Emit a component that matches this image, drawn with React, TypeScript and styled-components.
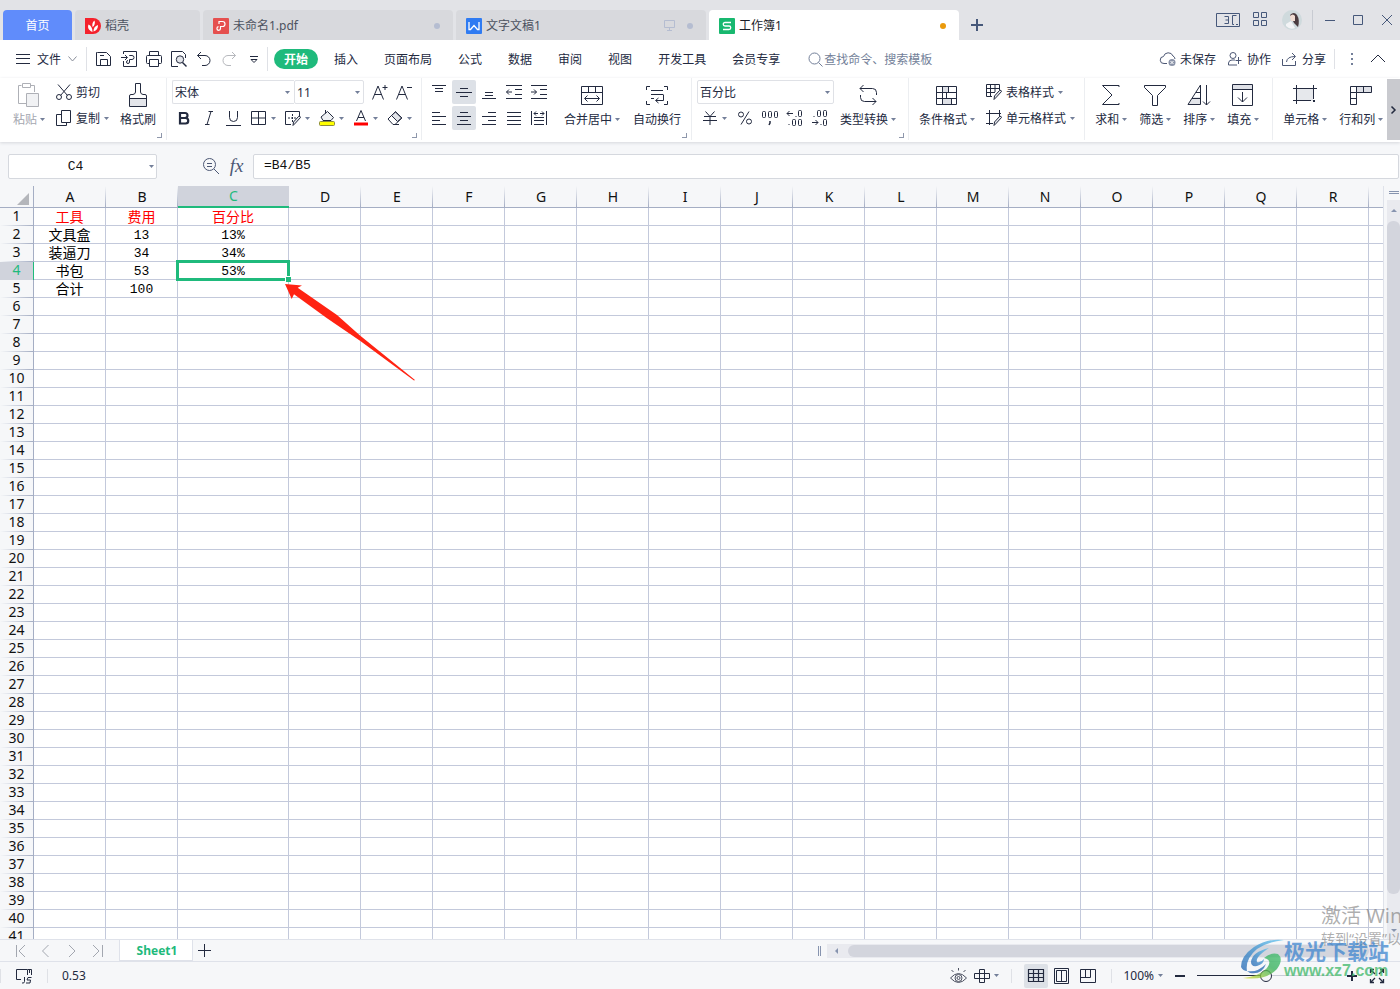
import React from "react";
import styled, { createGlobalStyle, css } from "styled-components";

const INK = "#232a3f";
const MUTED = "#737f99";
const GREEN = "#1fba7c";
const PANEL = "#f6f7f9";
const LINE = "#c3c9db";
const UI_FONT = `"Noto Sans", "Noto Sans CJK SC", sans-serif`;

const GlobalStyle = createGlobalStyle`
  *, *::before, *::after { box-sizing: border-box; }
  body { margin: 0; overflow: hidden; }
  button, input, select { font: inherit; color: inherit; }
`;

const App_ = styled.div`
  position: relative;
  display: flex;
  flex-direction: column;
  height: 100vh;
  overflow: hidden;
  background: ${PANEL};
  color: ${INK};
  font: 12px/17px ${UI_FONT};
`;

const PlainButton = styled.button<{ $faded?: boolean }>`
  display: flex;
  align-items: center;
  flex: none;
  gap: 4px;
  padding: 0;
  border: 0;
  background: none;
  white-space: nowrap;
  color: ${(p) => (p.$faded ? "#a4a7b0" : "inherit")};
`;

const Divider = styled.span<{ $h: number; $tone?: string }>`
  flex: none;
  width: 1px;
  height: ${(p) => p.$h}px;
  background: ${(p) => p.$tone || "#dfe1e6"};
`;

/* ---------- icons ---------- */

const Svg = styled.svg`
  display: block;
  flex: none;
  overflow: visible;
`;

type IconProps = { w?: number; h?: number; color?: string; children: React.ReactNode };
const Icon = ({ w = 16, h = 16, color = INK, children }: IconProps) => (
  <Svg width={w} height={h} viewBox={`0 0 ${w} ${h}`} fill="none" stroke={color} strokeWidth={1} aria-hidden="true">
    {children}
  </Svg>
);

const Caret = () => (
  <Svg width={5} height={3} viewBox="0 0 5 3" aria-hidden="true">
    <path d="M0 0h5L2.5 3z" fill={MUTED} />
  </Svg>
);

/* ---------- title bar ---------- */

const TitleBar = styled.header`
  display: flex;
  align-items: flex-end;
  flex: none;
  gap: 3px;
  height: 40px;
  padding: 0 5px 0 3px;
  background: #e2e3e7;
`;

const Tab = styled.button<{ $w: number; $kind?: "home" | "active" }>`
  display: flex;
  align-items: center;
  gap: 4px;
  width: ${(p) => p.$w}px;
  height: 30px;
  padding: 1px 13px 0 10px;
  border: 0;
  border-radius: 4px 4px 0 0;
  background: #d8d9dd;
  color: #4c5260;
  ${(p) => p.$kind === "home" && css`background: #608cfb; color: #fff; justify-content: center; padding: 1px 0 0;`}
  ${(p) => p.$kind === "active" && css`background: #fff; color: #1b1f2a;`}
`;

const TabStatus = styled.span`
  display: flex;
  align-items: center;
  gap: 12px;
  margin-left: auto;
`;

const Dot = styled.span<{ $color: string }>`
  width: 6px;
  height: 6px;
  border-radius: 50%;
  background: ${(p) => p.$color};
`;

const NewTab = styled(PlainButton)`
  height: 30px;
  margin-left: 8px;
`;

const WindowControls = styled.div`
  display: flex;
  align-items: center;
  gap: 10px;
  height: 40px;
  margin-left: auto;
`;

const ControlSet = styled.div<{ $gap: number }>`
  display: flex;
  align-items: center;
  gap: ${(p) => p.$gap}px;
`;

/* ---------- menu row ---------- */

const MenuRow = styled.nav`
  display: flex;
  align-items: center;
  flex: none;
  height: 38px;
  padding: 0 15px 0 16px;
  background: #fff;
`;

const QuickAccess = styled.div`
  display: flex;
  gap: 9px;
  padding: 0 5px 0 9px;
`;

const FileButton = styled(PlainButton)`
  gap: 7px;
  margin-right: 9px;
`;

const MenuTabs = styled.div`
  display: flex;
  gap: 6px;
  margin-left: 6px;
`;

const MenuTab = styled.button<{ $on?: boolean }>`
  height: 20px;
  padding: 1px 10px 0;
  border: 0;
  border-radius: 10px;
  background: ${(p) => (p.$on ? GREEN : "none")};
  color: ${(p) => (p.$on ? "#fff" : INK)};
  font-weight: ${(p) => (p.$on ? 700 : 400)};
  white-space: nowrap;
`;

const Search = styled.label`
  display: flex;
  align-items: center;
  gap: 1px;
  margin-left: 18px;
  input {
    width: 120px;
    padding: 0;
    border: 0;
    outline: 0;
    background: none;
  }
  input::placeholder { color: ${MUTED}; opacity: 1; }
`;

const MenuRight = styled.div`
  display: flex;
  align-items: center;
  gap: 11px;
  margin-left: auto;
`;

const MenuEnd = styled.div`
  display: flex;
  align-items: center;
  gap: 9px;
  margin-left: -3px;
`;

/* ---------- ribbon ---------- */

const Ribbon = styled.section`
  position: relative;
  z-index: 1;
  display: flex;
  flex: none;
  height: 64px;
  padding-bottom: 2px;
  background: #fff;
  box-shadow: 0 1px 3px #d5d7dc;
`;

const Group = styled.div<{ $gap?: number; $pad: string; $corner?: boolean }>`
  position: relative;
  display: flex;
  align-items: flex-start;
  flex: none;
  gap: ${(p) => p.$gap ?? 12}px;
  padding: ${(p) => p.$pad};
  &:not(:last-of-type) { border-right: 1px solid #eceef1; }
  ${(p) =>
    p.$corner &&
    css`
      &::after {
        content: "";
        position: absolute;
        right: 4px;
        bottom: 2px;
        width: 5px;
        height: 5px;
        border: solid #8e97ab;
        border-width: 0 1px 1px 0;
      }
    `}
`;

const Stack = styled.div`
  display: grid;
  grid-auto-rows: 24px;
  gap: 2px;
`;

const ToolRow = styled.div<{ $gap?: number; $inset?: number }>`
  display: flex;
  align-items: center;
  gap: ${(p) => p.$gap ?? 0}px;
  padding-left: ${(p) => p.$inset ?? 0}px;
`;

const BigButtonBox = styled.button<{ $faded?: boolean }>`
  display: flex;
  flex-direction: column;
  align-items: center;
  flex: none;
  gap: 4px;
  padding: 3px 0 0;
  border: 0;
  background: none;
  color: ${(p) => (p.$faded ? "#a4a7b0" : INK)};
  white-space: nowrap;
`;

const BigLabel = styled.span`
  display: flex;
  align-items: center;
  gap: 3px;
`;

const BigButton = ({ label, icon, caret = true, faded }: { label: string; icon: React.ReactNode; caret?: boolean; faded?: boolean }) => (
  <BigButtonBox type="button" $faded={faded}>
    {icon}
    <BigLabel>
      {label}
      {caret && <Caret />}
    </BigLabel>
  </BigButtonBox>
);

const SelectWrap = styled.label<{ $w: number; $join?: boolean }>`
  position: relative;
  display: block;
  width: ${(p) => p.$w}px;
  height: 24px;
  select {
    width: 100%;
    height: 100%;
    padding: 1px 2px 0;
    border: 1px solid #dfe1e6;
    border-right-width: ${(p) => (p.$join ? 0 : 1)}px;
    border-radius: ${(p) => (p.$join ? "2px 0 0 2px" : "2px")};
    outline: 0;
    background: #fff;
    appearance: none;
  }
  svg {
    position: absolute;
    top: 11px;
    right: 4px;
  }
`;

const Combo = ({ w, value, name, join }: { w: number; value: string; name: string; join?: boolean }) => (
  <SelectWrap $w={w} $join={join}>
    <select aria-label={name} defaultValue={value}>
      <option>{value}</option>
    </select>
    <Caret />
  </SelectWrap>
);

const SquareTool = styled.button<{ $on?: boolean }>`
  display: grid;
  place-items: center;
  width: 24px;
  height: 24px;
  padding: 0;
  border: 0;
  border-radius: 2px;
  background: ${(p) => (p.$on ? "#dde1e7" : "none")};
`;

const RibbonScroll = styled.button`
  display: grid;
  place-items: center;
  align-self: stretch;
  width: 13px;
  margin: 1px 0 0 auto;
  padding: 0;
  border: 0;
  background: #c9cacf;
`;

/* ---------- formula bar ---------- */

const FormulaBar = styled.section`
  display: flex;
  align-items: center;
  flex: none;
  gap: 7px;
  height: 44px;
  padding: 4px 1px 0 8px;
`;

const Field = styled.input`
  flex: 1;
  width: 100%;
  height: 25px;
  padding: 0 10px 2px;
  border: 1px solid #d5d8de;
  border-radius: 2px;
  outline: 0;
  background: #fff;
  color: #111;
  font: 13px "Liberation Mono", monospace;
`;

const NameBox = styled.label`
  position: relative;
  flex: none;
  width: 149px;
  margin-right: 38px;
  ${Field} { text-align: center; padding: 0 20px 0 6px; }
  svg { position: absolute; top: 11px; right: 3px; }
`;

const Fx = styled(PlainButton)`
  justify-content: center;
  width: 19px;
  height: 20px;
  color: #4c5774;
  font: italic 19px/20px "Liberation Serif", serif;
`;

/* ---------- sheet ---------- */

const SheetArea = styled.main`
  display: flex;
  flex: 1;
  min-height: 0;
  overflow: hidden;
`;

const GridClip = styled.div`
  position: relative;
  flex: 1;
  min-width: 0;
  overflow: hidden;
  border-right: 1px solid #dfe2ea;
`;

const Grid = styled.table`
  width: 1441px;
  table-layout: fixed;
  border-collapse: separate;
  border-spacing: 0;
  background: #fff;
`;

const ColHead = styled.th<{ $on?: boolean }>`
  height: 22px;
  padding: 0;
  border-bottom: 1px solid #a5aec4;
  background: linear-gradient(to bottom, ${PANEL}, #a5aec4) right / 1px 100% no-repeat ${PANEL};
  color: #111;
  font: 14px/20px ${UI_FONT};
  ${(p) => p.$on && css`background: #d0d3dc; color: ${GREEN}; border-bottom: 2px solid ${GREEN};`}
`;

const RowHead = styled.th<{ $on?: boolean }>`
  height: 18px;
  padding: 0 0 2px;
  border-right: 1px solid ${(p) => (p.$on ? GREEN : "#a5aec4")};
  background: linear-gradient(to right, ${PANEL}, #a5aec4) bottom / 100% 1px no-repeat ${PANEL};
  color: #111;
  font: 14px/16px ${UI_FONT};
  ${(p) => p.$on && css`background: #d0d3dc; color: ${GREEN};`}
`;

const CornerHead = styled.th`
  padding: 0;
  border-right: 1px solid #a5aec4;
  border-bottom: 1px solid #a5aec4;
  background: ${PANEL};
  svg { margin: 4px 4px 0 auto; }
`;

const Cell = styled.td<{ $kind?: "text" | "title" | "number" }>`
  position: relative;
  height: 18px;
  padding: 0;
  border-right: 1px solid ${LINE};
  border-bottom: 1px solid ${LINE};
  color: ${(p) => (p.$kind === "title" ? "#f00" : "#000")};
  font: 14px/17px "Noto Sans CJK SC", sans-serif;
  ${(p) => p.$kind === "number" && css`padding-top: 3px; font: 13px/14px "Liberation Mono", monospace;`}
  text-align: center;
  white-space: nowrap;
`;

const Selection = styled.span`
  position: absolute;
  inset: -2px -2px -2px -2px;
  z-index: 1;
  border: 3px solid ${GREEN};
  &::after {
    content: "";
    position: absolute;
    right: -4px;
    bottom: -4px;
    width: 6px;
    height: 6px;
    border: solid #fff;
    border-width: 1px 0 0 1px;
    background: ${GREEN};
  }
`;

const Pointer = styled.svg`
  position: absolute;
  top: 98px;
  left: 285px;
  z-index: 2;
`;

const VScroll = styled.div`
  display: flex;
  flex-direction: column;
  align-items: center;
  flex: none;
  width: 16px;
  padding-left: 3px;
`;

const SplitHandle = styled.span<{ $v?: boolean }>`
  flex: none;
  border: solid #8794af;
  ${(p) =>
    p.$v
      ? css`width: 3px; height: 10px; border-width: 0 1px;`
      : css`width: 10px; height: 3px; margin: 5px 0 6px; border-width: 1px 0;`}
`;

const VTrack = styled.div`
  display: flex;
  flex-direction: column;
  align-items: center;
  flex: 1;
  gap: 9px;
  width: 13px;
  padding: 9px 0 7px;
  background: #e9eaef;
`;

const Thumb = styled.span`
  flex: 1;
  align-self: stretch;
  border-radius: 6px;
  background: #d3d5dd;
`;

const VThumb = styled(Thumb)`
  margin-bottom: 26px;
`;

/* ---------- bottom bars ---------- */

const SheetBar = styled.section`
  display: flex;
  align-items: stretch;
  flex: none;
  height: 22px;
  padding: 0 17px 0 14px;
  border-top: 1px solid #dfe2ea;
`;

const SheetNav = styled.div`
  display: flex;
  align-items: center;
  gap: 12px;
  margin-right: 13px;
`;

const SheetTab = styled.button`
  width: 74px;
  padding: 1px 0 0 2px;
  border: solid #dfe2ea;
  border-width: 0 1px 1px;
  background: #fff;
  color: ${GREEN};
  font-weight: 700;
`;

const AddSheet = styled(PlainButton)`
  margin-left: 5px;
`;

const HScroll = styled.div`
  display: flex;
  align-items: center;
  gap: 6px;
  width: 565px;
  margin-left: auto;
`;

const HTrack = styled.div`
  display: flex;
  align-items: center;
  flex: 1;
  gap: 10px;
  height: 14px;
  padding: 1px 14px 1px 8px;
  background: #e9eaef;
`;

const HThumb = styled(Thumb)`
  height: 12px;
`;

const StatusBar = styled.footer`
  display: flex;
  align-items: center;
  flex: none;
  gap: 14px;
  height: 28px;
  padding-right: 15px;
  border-top: 1px solid #dfe2ea;
`;

const StatusTools = styled.div`
  display: flex;
  align-items: center;
  gap: 7px;
  margin-left: auto;
`;

const StatusGroup = styled.div<{ $gap: number; $side?: number }>`
  display: flex;
  align-items: center;
  gap: ${(p) => p.$gap}px;
  padding: 0 ${(p) => p.$side ?? 0}px;
`;

const ZoomSlider = styled.input`
  width: 138px;
  height: 12px;
  margin: 0;
  appearance: none;
  background: linear-gradient(to right, ${INK} 50%, #c9ccd6 50%) center / 100% 1px no-repeat;
  &::-webkit-slider-thumb {
    appearance: none;
    width: 12px;
    height: 12px;
    border: 1px solid ${INK};
    border-radius: 50%;
    background: ${PANEL};
  }
`;

/* ---------- overlays ---------- */

const Activation = styled.div`
  position: absolute;
  right: 0;
  bottom: 40px;
  z-index: 3;
  width: 79px;
  overflow: hidden;
  color: rgba(120, 120, 120, 0.6);
  font-size: 14px;
  line-height: 20px;
  white-space: nowrap;
  pointer-events: none;
  strong { display: block; font-weight: 400; font-size: 20px; line-height: 26px; }
`;

const Brand = styled.div`
  position: absolute;
  right: 11px;
  bottom: 7px;
  z-index: 4;
  display: flex;
  align-items: center;
  opacity: 0.75;
  pointer-events: none;
`;

const BrandText = styled.div`
  color: #3f86cf;
  font: 700 21px/22px "Noto Sans CJK SC", sans-serif;
  white-space: nowrap;
  small { display: block; color: #3fb868; font: 700 16px/20px "Liberation Sans", sans-serif; }
`;

/* ---------- data ---------- */

const COLUMNS = "ABCDEFGHIJKLMNOPQRS".split("");
const ROWS = Array.from({ length: 41 }, (_, i) => i + 1);
const DATA: Record<number, string[]> = {
  1: ["工具", "费用", "百分比"],
  2: ["文具盒", "13", "13%"],
  3: ["装逼刀", "34", "34%"],
  4: ["书包", "53", "53%"],
  5: ["合计", "100", ""],
};
const MENU = ["开始", "插入", "页面布局", "公式", "数据", "审阅", "视图", "开发工具", "会员专享"];

const kindOf = (text: string, row: number) =>
  row === 1 ? "title" : /^\d/.test(text) ? "number" : "text";

const lines = (rows: [number, number, number][]) => (
  <Icon>
    <path d={rows.map(([y, a, b]) => `M${a} ${y}.5H${b}`).join("")} />
  </Icon>
);

const ALIGN_TOP: [string, React.ReactNode, boolean?][] = [
  ["顶端对齐", lines([[1, 1, 15], [4, 4, 12], [7, 4, 12]])],
  ["垂直居中", lines([[4, 4, 12], [8, 0, 16], [12, 4, 12]]), true],
  ["底端对齐", lines([[8, 4, 12], [11, 4, 12], [14, 1, 15]])],
  ["减少缩进", <Icon key="o"><path d="M0 1.5H16M9 5.5H16M9 10.5H16M0 14.5H16M6 8H.5M3 5.5.5 8 3 10.5" /></Icon>],
  ["增加缩进", <Icon key="i"><path d="M0 1.5H16M9 5.5H16M9 10.5H16M0 14.5H16M0 8H5.5M3 5.5 5.5 8 3 10.5" /></Icon>],
];
const ALIGN_BOTTOM: [string, React.ReactNode, boolean?][] = [
  ["左对齐", lines([[2, 1, 9], [6, 1, 15], [10, 1, 9], [14, 1, 15]])],
  ["居中", lines([[2, 4, 12], [6, 1, 15], [10, 4, 12], [14, 1, 15]]), true],
  ["右对齐", lines([[2, 7, 15], [6, 1, 15], [10, 7, 15], [14, 1, 15]])],
  ["两端对齐", lines([[2, 1, 15], [6, 1, 15], [10, 1, 15], [14, 1, 15]])],
  ["分散对齐", <Icon key="d"><path d="M.5 1V15M15.5 1V15M3 7.5H13M3 10.5H13M3 14.5H13M3 3.5H7M9 3.5H13M5 1.5 3 3.5 5 5.5M11 1.5 13 3.5 11 5.5" /></Icon>],
];

const BrushOverlay = () => (
  <path d="M15.5 7.5 10.5 13 8 15.5 8.5 12 13.7 6.3Q15.5 6 15.5 7.5Z" fill="#e8eaee" />
);

export default function App() {
  return (
    <App_>
      <GlobalStyle />

      <TitleBar>
        <Tab $w={69} $kind="home">首页</Tab>
        <Tab $w={125}>
          <Icon>
            <path d="M0 0H8A8 8 0 0 1 8 16H0Z" fill="#f5222d" stroke="none" />
            <path d="M7.500 14C3 12 2.500 9 3.500 6.500 6 7.500 7.500 10 7.500 14ZM7.500 9C7 6 7.500 4 9.500 2.500 10.500 5 9.500 8 7.500 9ZM8.500 13.500C8.500 10 10 8 13 7 13 10 12 12.500 8.500 13.500Z" fill="#fff" stroke="none" />
          </Icon>
          稻壳
        </Tab>
        <Tab $w={250}>
          <Icon>
            <rect width="16" height="16" rx="1" fill="#e5504f" stroke="none" />
            <path d="M6 6V3.500H9.500A2.500 2.500 0 0 1 9.500 8.500H7.500V10.500A1.800 1.800 0 1 1 5.500 8.700" stroke="#fff" strokeWidth="1.200" />
          </Icon>
          未命名1.pdf
          <TabStatus><Dot $color="#b5bdd1" /></TabStatus>
        </Tab>
        <Tab $w={250}>
          <Icon>
            <rect width="16" height="16" rx="1" fill="#2f7bf2" stroke="none" />
            <path d="M3 4V11.500H4.500L8 7.500 11.500 11.500H13V4" stroke="#fff" strokeWidth="1.300" />
          </Icon>
          文字文稿1
          <TabStatus>
            <Icon w={11} h={11} color="#b5bdd1">
              <path d="M.5.5H10.500V7.500H.5ZM5.500 7.500V10.500M3 10.500H8" />
            </Icon>
            <Dot $color="#b5bdd1" />
          </TabStatus>
        </Tab>
        <Tab $w={250} $kind="active">
          <Icon>
            <rect width="16" height="16" rx="1" fill="#18b86f" stroke="none" />
            <path d="M12 4.500H6A1.700 1.700 0 0 0 6 8H10A1.700 1.700 0 0 1 10 11.500H4" stroke="#fff" strokeWidth="1.300" />
          </Icon>
          工作簿1
          <TabStatus><Dot $color="#ea9a0c" /></TabStatus>
        </Tab>
        <NewTab type="button" aria-label="新建标签">
          <Icon w={14} h={12} color="#46587a"><path d="M7 0V12M1 6H13" strokeWidth="2" /></Icon>
        </NewTab>
        <WindowControls>
          <ControlSet $gap={13}>
            <PlainButton type="button" aria-label="窗口列表">
              <Icon w={24} h={14} color="#46587a">
                <path d="M.5.5H23.500V13.500H.5ZM20.500 2.500H16.500V11.500H18M20 11.500H22" />
                <path d="M8.500 3.500H12.500V10.500H8.500M9.500 7H12.500" />
              </Icon>
            </PlainButton>
            <PlainButton type="button" aria-label="应用">
              <Icon color="#46587a"><path d="M.5.5H5.500V5.500H.5ZM8.500.5H13.500V5.500H8.500ZM.5 8.500H5.500V13.500H.5ZM8.500 8.500H13.500V13.500H8.500Z" /></Icon>
            </PlainButton>
            <PlainButton type="button" aria-label="账户">
              <Icon w={20} h={20}>
                <circle cx="10" cy="10" r="10" fill="#cfdadd" stroke="none" />
                <path d="M8 5Q12 1 15 5 18 10 16 17L12 13Z" fill="#4b3c40" stroke="none" />
                <path d="M8 6Q11 3 13 6V11L9 11Z" fill="#f0dcd2" stroke="none" />
                <path d="M4 14 9 11 13 18Q8 20 4 16Z" fill="#f3f4f6" stroke="none" />
              </Icon>
            </PlainButton>
          </ControlSet>
          <Divider $h={20} $tone="#c8cbd2" />
          <ControlSet $gap={12}>
            <PlainButton type="button" aria-label="最小化"><Icon color="#46587a"><path d="M2 8.500H12" /></Icon></PlainButton>
            <PlainButton type="button" aria-label="最大化"><Icon color="#46587a"><path d="M2.500 3.500H11.500V12.500H2.500Z" /></Icon></PlainButton>
            <PlainButton type="button" aria-label="关闭"><Icon color="#46587a"><path d="M3 3 13 13M13 3 3 13" /></Icon></PlainButton>
          </ControlSet>
        </WindowControls>
      </TitleBar>

      <MenuRow>
        <FileButton type="button">
          <Icon w={14} h={12}><path d="M0 1.500H14M0 5.500H14M0 10.500H14" /></Icon>
          文件
          <Icon w={9} h={6} color="#8a8f9b"><path d="M.5.5 4.500 5 8.500.5" /></Icon>
        </FileButton>
        <Divider $h={24} />
        <QuickAccess>
          <PlainButton type="button" aria-label="保存">
            <Icon><path d="M1.500 1.500H10.500L14.500 5.500V14.500H.5V1.500ZM4.500 14.500V8.500H11.500V14.500M4 4.500H8" /></Icon>
          </PlainButton>
          <PlainButton type="button" aria-label="输出为PDF">
            <Icon><path d="M2.500 3V.5H15.500V15.500H2.500V10M0 6.500H6M4 4 6.500 6.500 4 9M8.500 5V4.500H11A2 2 0 0 1 11 8.500H8.500V11A1.500 1.500 0 1 1 7 9.500" /></Icon>
          </PlainButton>
          <PlainButton type="button" aria-label="打印">
            <Icon><path d="M3.500 4.500V.5H12.500V4.500M3.500 12.500H1.500Q.5 12.500.5 11.500V5.500Q.5 4.500 1.500 4.500H14.500Q15.500 4.500 15.500 5.500V11.500Q15.500 12.500 14.500 12.500H12.500M3.500 8.500H12.500V15.500H3.500Z" /></Icon>
          </PlainButton>
          <PlainButton type="button" aria-label="打印预览">
            <Icon>
              <path d="M14.500 7V3.500L11.500.5H.5V15.500H7" />
              <circle cx="9" cy="8.500" r="3.700" fill="#e3e5ea" />
              <path d="M11.500 11.500 15.500 15.500" strokeWidth="1.500" />
            </Icon>
          </PlainButton>
          <PlainButton type="button" aria-label="撤销">
            <Icon><path d="M5 1 1.500 4.500 5 8M1.500 4.500H9A5 5 0 0 1 9 14.500H6" /></Icon>
          </PlainButton>
          <PlainButton type="button" aria-label="恢复">
            <Icon color="#b6b8bd"><path d="M11 1 14.500 4.500 11 8M14.500 4.500H7A5 5 0 0 0 7 14.500H10" /></Icon>
          </PlainButton>
          <PlainButton type="button" aria-label="自定义快速访问">
            <Icon><path d="M4 5.500H12M5 8.500H11L8 11.500Z" /></Icon>
          </PlainButton>
        </QuickAccess>
        <Divider $h={24} />
        <MenuTabs>
          {MENU.map((m, i) => (
            <MenuTab key={m} type="button" $on={i === 0}>{m}</MenuTab>
          ))}
        </MenuTabs>
        <Search>
          <Icon w={15} h={15} color={MUTED}><circle cx="6.500" cy="6.500" r="5.500" /><path d="M10.500 10.500 14.500 14.500" /></Icon>
          <input aria-label="搜索" placeholder="查找命令、搜索模板" />
        </Search>
        <MenuRight>
          <PlainButton type="button">
            <Icon color="#4c5774">
              <path d="M7 12.500H4A3.500 3.500 0 0 1 3.500 5.500 5 5 0 0 1 13 5 3.500 3.500 0 0 1 15 8" />
              <circle cx="12" cy="11.500" r="3.500" fill="#8a93a8" stroke="none" />
              <path d="M10.500 10 13.500 13M13.500 10 10.500 13" stroke="#fff" />
            </Icon>
            未保存
          </PlainButton>
          <PlainButton type="button">
            <Icon color="#4c5774">
              <circle cx="6" cy="4.500" r="3" />
              <path d="M10 14H1.500V12A3.500 3.500 0 0 1 5 9H8M11.500 6V13M8.500 9.500H14.500" />
            </Icon>
            协作
          </PlainButton>
          <PlainButton type="button">
            <Icon color="#4c5774"><path d="M.5 8V14.500H13.500V10M4.500 11Q5 5.500 13 5.500M10 2 13.500 5.500 10 9" /></Icon>
            分享
          </PlainButton>
          <MenuEnd>
            <Divider $h={20} />
            <PlainButton type="button" aria-label="更多">
              <Icon><path d="M8 2V4M8 7V9M8 12V14" strokeWidth="2" stroke={MUTED} /></Icon>
            </PlainButton>
            <PlainButton type="button" aria-label="收起功能区">
              <Icon><path d="M2 11 9 4 16 11" /></Icon>
            </PlainButton>
          </MenuEnd>
        </MenuRight>
      </MenuRow>

      <Ribbon>
        <Group $pad="2px 10px 0 13px" $gap={11} $corner>
          <BigButton
            faded
            label="粘贴"
            icon={
              <Icon w={24} h={24} color="#aeb0b6">
                <path d="M4.500 2.500H1.500V20.500H9M13.500 2.500H17.500V9M5.500.5H13.500V4.500H5.500Z" />
                <path d="M9.500 10.500H21.500V23.500H9.500Z" fill="#f1f2f4" />
              </Icon>
            }
          />
          <Stack>
            <PlainButton type="button">
              <Icon>
                <path d="M2 .5 11.500 11.500M14 .5 4.500 11.500" />
                <circle cx="3" cy="13" r="2.500" />
                <circle cx="13" cy="13" r="2.500" />
              </Icon>
              剪切
            </PlainButton>
            <PlainButton type="button">
              <Icon><path d="M5.500.5H14.500V12.500H5.500ZM5.500 4.500H.5V15.500H10.500V12.500" /></Icon>
              复制
              <Caret />
            </PlainButton>
          </Stack>
          <BigButton
            caret={false}
            label="格式刷"
            icon={
              <Icon w={20} h={24}>
                <path d="M1.500 16H18.500V23.500H1.500Z" fill="#e3e5ea" stroke="none" />
                <path d="M1.500 23.500V13Q1.500 11.500 3 11.500H5Q7.500 11 7.500 9V.5H12.500V9Q12.500 11 15 11.500H17Q18.500 11.500 18.500 13V23.500ZM1.500 15.500H18.500" />
              </Icon>
            }
          />
        </Group>

        <Group $pad="2px 9px 0 5px" $corner>
          <Stack>
            <ToolRow>
              <Combo w={122} value="宋体" name="字体" join />
              <Combo w={70} value="11" name="字号" />
              <ToolRow $gap={8} $inset={8}>
                <PlainButton type="button" aria-label="增大字号">
                  <Icon><path d="M.5 15.500 6 2 11.500 15.500M2.500 10.500H9.500M13 1V6M10.500 3.500H15.500" /></Icon>
                </PlainButton>
                <PlainButton type="button" aria-label="减小字号">
                  <Icon><path d="M.5 15.500 6 2 11.500 15.500M2.500 10.500H9.500M11 3.500H16" /></Icon>
                </PlainButton>
              </ToolRow>
            </ToolRow>
            <ToolRow $gap={9} $inset={4}>
              <PlainButton type="button" aria-label="加粗">
                <Icon><path d="M4 3H9A2.500 2.500 0 0 1 9 8H4ZM4 8H9.500A2.700 2.700 0 0 1 9.500 13.500H4Z" strokeWidth="2.200" /></Icon>
              </PlainButton>
              <PlainButton type="button" aria-label="倾斜">
                <Icon><path d="M7.500 1.500H12M4 14.500H8.500M10 1.500 6 14.500" /></Icon>
              </PlainButton>
              <PlainButton type="button" aria-label="下划线">
                <Icon><path d="M3.500 1V7.500A4 4 0 0 0 11.500 7.500V1M0 15.500H15" /></Icon>
              </PlainButton>
              <PlainButton type="button" aria-label="边框">
                <Icon><path d="M.5 1.500H14.500V14.500H.5ZM7.500 1.500V14.500M.5 8H14.500" /></Icon>
                <Caret />
              </PlainButton>
              <PlainButton type="button" aria-label="绘制边框">
                <Icon>
                  <path d="M14.500 6V1.500H.5V14.500H6" />
                  <path d="M7.500 4V12M3 8H12" strokeDasharray="2 1" />
                  <BrushOverlay />
                </Icon>
                <Caret />
              </PlainButton>
              <PlainButton type="button" aria-label="填充颜色">
                <Icon>
                  <path d="M2 7 8.500 1.500 14.500 7.500 12 10.500H4Z" fill="#eef0f3" />
                  <path d="M6.500 0V3.500" />
                  <rect x=".5" y="11.500" width="15" height="4" rx="1" fill="#ff0" stroke="#8c8c3c" />
                </Icon>
                <Caret />
              </PlainButton>
              <PlainButton type="button" aria-label="字体颜色">
                <Icon><path d="M3.500 11 8 .5 12.500 11M5 7.500H11" /><path d="M1 14H15" stroke="#f00" strokeWidth="3" /></Icon>
                <Caret />
              </PlainButton>
              <PlainButton type="button" aria-label="清除">
                <Icon>
                  <path d="M1 9 8.500 1.500 15 8 8 14.500H6Z" />
                  <path d="M8.500 2 14.500 8 10.500 11.500 4.500 5.500Z" fill="#e3e5ea" />
                  <path d="M6 14.500H12" />
                </Icon>
                <Caret />
              </PlainButton>
            </ToolRow>
          </Stack>
        </Group>

        <Group $pad="2px 10px 0 5px" $gap={13} $corner>
          <Stack>
            {[ALIGN_TOP, ALIGN_BOTTOM].map((set, i) => (
              <ToolRow key={i} $gap={1}>
                {set.map(([name, icon, on]) => (
                  <SquareTool key={name} type="button" aria-label={name} $on={on}>{icon}</SquareTool>
                ))}
              </ToolRow>
            ))}
          </Stack>
          <BigButton
            label="合并居中"
            icon={
              <Icon w={24} h={24}>
                <path d="M1.500 3.500H22.500V21.500H1.500ZM1.500 9.500H22.500M8.500 3.500V9.500M15.500 3.500V9.500M5 15.500H19M7.500 12.500 4.500 15.500 7.500 18.500M16.500 12.500 19.500 15.500 16.500 18.500" />
              </Icon>
            }
          />
          <BigButton
            caret={false}
            label="自动换行"
            icon={
              <Icon w={24} h={24}>
                <path d="M5 3.500H1.500V7M19 3.500H22.500V7M5 21.500H1.500V18M19 21.500H22.500V18M6 7.500H18M6 11.500H18M6 15.500H9M18.500 11.500V17.500H11M13.500 15 10.500 17.500 13.500 20" />
              </Icon>
            }
          />
        </Group>

        <Group $pad="2px 12px 0 5px" $gap={6} $corner>
          <Stack>
            <Combo w={137} value="百分比" name="数字格式" />
            <ToolRow $gap={9} $inset={5}>
              <PlainButton type="button" aria-label="货币">
                <Icon><path d="M3.500 1.500 8 6.500 12.500 1.500M2 6.500H14M1 10.500H15M8 6.500V15" /></Icon>
                <Caret />
              </PlainButton>
              <ToolRow $gap={7}>
                <PlainButton type="button" aria-label="百分比样式">
                  <Icon w={18} h={16}><circle cx="5" cy="4.500" r="2.500" /><circle cx="13" cy="11.500" r="2.500" /><path d="M13 1.500 5 14.500" /></Icon>
                </PlainButton>
                <PlainButton type="button" aria-label="千位分隔">
                  <Icon w={18} h={16}>
                    {[1.5, 7.5, 13.5].map((x) => <rect key={x} x={x} y="1.500" width="3" height="6" rx="1" />)}
                    <path d="M9 11V13L8 15" strokeWidth="1.500" />
                  </Icon>
                </PlainButton>
                <PlainButton type="button" aria-label="增加小数位">
                  <Icon w={18} h={16}>
                    <path d="M7 3.500H1M3.500 1 1 3.500 3.500 6M10 6V7M3 14V15" />
                    <rect x="12.500" y=".5" width="3" height="6" rx="1" />
                    <rect x="6.500" y="9.500" width="3" height="6" rx="1" />
                    <rect x="12.500" y="9.500" width="3" height="6" rx="1" />
                  </Icon>
                </PlainButton>
                <PlainButton type="button" aria-label="减少小数位">
                  <Icon w={18} h={16}>
                    <path d="M1 12.500H7M4.500 10 7 12.500 4.500 15M10 14V15M3 6V7" />
                    <rect x="6.500" y=".5" width="3" height="6" rx="1" />
                    <rect x="12.500" y=".5" width="3" height="6" rx="1" />
                    <rect x="12.500" y="9.500" width="3" height="6" rx="1" />
                  </Icon>
                </PlainButton>
              </ToolRow>
            </ToolRow>
          </Stack>
          <BigButton
            label="类型转换"
            icon={
              <Icon w={24} h={24}>
                <path d="M7.500 2 4 5.500 7.500 9M4 5.500H16.500Q20.500 5.500 20.500 9.500V12M16.500 15 20 18.500 16.500 22M20 18.500H8.500Q4.500 18.500 4.500 14.500V12" />
              </Icon>
            }
          />
        </Group>

        <Group $pad="2px 9px 0 10px" $gap={11}>
          <BigButton
            label="条件格式"
            icon={
              <Icon w={24} h={24}>
                <path d="M7 3H13V9H7ZM7 15H16V21H7Z" fill="#dfe1e7" stroke="none" />
                <path d="M1.500 3.500H21.500V21.500H1.500ZM1.500 9.500H21.500M1.500 15.500H21.500M7.500 3.500V21.500M13.500 3.500V9.500M11.500 9.500V15.500M16.500 15.500V21.500" />
              </Icon>
            }
          />
          <Stack>
            <PlainButton type="button">
              <Icon><path d="M13.500 6V.5H.5V12.500H6M.5 4.500H13.500M.5 8.500H9M4.500.5V12.500M9 .5V8" /><BrushOverlay /></Icon>
              表格样式
              <Caret />
            </PlainButton>
            <PlainButton type="button">
              <Icon><path d="M0 3.500H15M3.500 0V15M13.500 0V7M0 13.500H7" /><BrushOverlay /></Icon>
              单元格样式
              <Caret />
            </PlainButton>
          </Stack>
        </Group>

        <Group $pad="2px 13px 0 10px">
          <BigButton label="求和" icon={<Icon w={24} h={24}><path d="M20 4V2.500H3.500L13 12 3.500 21.500H20V20" /></Icon>} />
          <BigButton label="筛选" icon={<Icon w={24} h={24}><path d="M1.500 2.500H22.500V4.500L14.500 12.500V22.500H9.500V12.500L1.500 4.500Z" /></Icon>} />
          <BigButton
            label="排序"
            icon={
              <Icon w={24} h={24}>
                <path d="M6 14H13V21H2Z" fill="#e3e5ea" stroke="none" />
                <path d="M1 21.500 13.500 2V21.500ZM9 9.500H13.500M5 15.500H13.500M19.500 2V22M16 18.500 19.500 22 23 18.500" />
              </Icon>
            }
          />
          <BigButton
            label="填充"
            icon={
              <Icon w={24} h={24}>
                <path d="M2 2H22V6H2Z" fill="#dfe1e7" stroke="none" />
                <path d="M1.500 1.500H21.500V22.500H1.500ZM1.500 6.500H21.500M11.500 9V19M7 14.500 11.500 19 16 14.500" />
              </Icon>
            }
          />
        </Group>

        <Group $pad="2px 0 0 10px">
          <BigButton
            label="单元格"
            icon={
              <Icon w={24} h={24}>
                <path d="M4 6H20V18H4Z" fill="#e6e8ec" stroke="none" />
                <path d="M0 5.500H24M0 17.500H18M3.500 2V21M20.500 2V16" />
                <path d="M20 18H22" strokeWidth="2" />
              </Icon>
            }
          />
          <BigButton
            label="行和列"
            icon={
              <Icon w={24} h={24}>
                <path d="M8 3H23V9H8Z" fill="#dfe1e7" stroke="none" />
                <path d="M1.500 3.500H22.500V9.500H7.500V21.500H1.500ZM1.500 9.500H7.500V3.500M14.500 3.500V9.500M1.500 15.500H7.500" />
              </Icon>
            }
          />
        </Group>
        <RibbonScroll type="button" aria-label="更多工具">
          <Icon w={5} h={8}><path d="M.5.5 4 4 .5 7.500" strokeWidth="1.500" /></Icon>
        </RibbonScroll>
      </Ribbon>

      <FormulaBar>
        <NameBox>
          <Field aria-label="名称框" defaultValue="C4" />
          <Caret />
        </NameBox>
        <PlainButton type="button" aria-label="浏览公式结果">
          <Icon w={18} h={18} color="#4c5774"><circle cx="7.500" cy="7.500" r="6" /><path d="M5 6.500H10M5 9.500H10M12 12 17 17" /></Icon>
        </PlainButton>
        <Fx type="button">fx</Fx>
        <Field aria-label="编辑栏" defaultValue="=B4/B5" />
      </FormulaBar>

      <SheetArea>
        <GridClip>
          <Grid>
            <colgroup>
              <col style={{ width: 34 }} />
              {COLUMNS.map((c) => <col key={c} style={{ width: c === "C" ? 111 : 72 }} />)}
            </colgroup>
            <thead>
              <tr>
                <CornerHead aria-label="全选">
                  <Svg width={12} height={12} viewBox="0 0 12 12"><path d="M12 0V12H0Z" fill="#b4b6bb" /></Svg>
                </CornerHead>
                {COLUMNS.map((c) => <ColHead key={c} scope="col" $on={c === "C"}>{c}</ColHead>)}
              </tr>
            </thead>
            <tbody>
              {ROWS.map((r) => (
                <tr key={r}>
                  <RowHead scope="row" $on={r === 4}>{r}</RowHead>
                  {COLUMNS.map((c, i) => {
                    const text = DATA[r]?.[i] ?? "";
                    return (
                      <Cell key={c} $kind={text ? kindOf(text, r) : undefined}>
                        {text}
                        {r === 4 && c === "C" && <Selection />}
                      </Cell>
                    );
                  })}
                </tr>
              ))}
            </tbody>
          </Grid>
          <Pointer width={131} height={98} viewBox="0 0 131 98" aria-hidden="true">
            <path d="M0 0 17 1.500 12.700 3.700 52 31 75 51.500 130 96 129 96.500 75 56.700 42 34.300 9 10.300 6.700 15Z" fill="#ff2312" />
          </Pointer>
        </GridClip>
        <VScroll>
          <SplitHandle />
          <VTrack>
            <Svg width={6} height={3} viewBox="0 0 6 3"><path d="M3 0 6 3H0Z" fill="#8794af" /></Svg>
            <VThumb />
            <Svg width={6} height={3} viewBox="0 0 6 3"><path d="M0 0H6L3 3Z" fill="#8794af" /></Svg>
          </VTrack>
        </VScroll>
      </SheetArea>

      <SheetBar>
        <SheetNav>
          {[
            ["第一张", "M2.500 1V13M11 1 5 7 11 13"],
            ["上一张", "M8.500 1 2.500 7 8.500 13"],
            ["下一张", "M3 1 9 7 3 13"],
            ["最后一张", "M1 1 7 7 1 13M10.500 1V13"],
          ].map(([name, d]) => (
            <PlainButton key={name} type="button" aria-label={name}>
              <Icon w={14} h={14} color="#a3a7b0"><path d={d} /></Icon>
            </PlainButton>
          ))}
        </SheetNav>
        <SheetTab type="button">Sheet1</SheetTab>
        <AddSheet type="button" aria-label="新建工作表">
          <Icon w={13} h={13}><path d="M6.500 0V13M0 6.500H13" /></Icon>
        </AddSheet>
        <HScroll>
          <SplitHandle $v />
          <HTrack>
            <Svg width={3} height={6} viewBox="0 0 3 6"><path d="M3 0V6L0 3Z" fill="#8794af" /></Svg>
            <HThumb />
          </HTrack>
        </HScroll>
      </SheetBar>

      <StatusBar>
        <Divider $h={14} />
        <PlainButton type="button" aria-label="宏">
          <Icon w={18} h={16}>
            <path d="M6 11.500H1.500V1.500H12M12.500 7V1.500H16.500V7M14.500 1.500V5M9.500 9V13.500Q9.500 15.500 7 15M16.500 9.500H13L12 12H15.500L15 15H11" />
          </Icon>
        </PlainButton>
        <Divider $h={14} />
        <span>0.53</span>
        <StatusTools>
          <StatusGroup $gap={7}>
            <PlainButton type="button" aria-label="护眼模式">
              <Icon w={17} h={16} color="#4c5161">
                <path d="M.5 10Q8.500 1 16.500 10 8.500 19 .5 10ZM8.500 0V2.500M1.500 2 3.500 4M15.500 2 13.500 4" />
                <circle cx="8.500" cy="10" r="3.500" /><circle cx="8.500" cy="10" r="1.500" />
              </Icon>
            </PlainButton>
            <PlainButton type="button" aria-label="阅读模式">
              <Icon><path d="M.5 5.500H15.500V10.500H.5ZM5.500 1.500H10.500V14.500H5.500Z" /></Icon>
              <Caret />
            </PlainButton>
          </StatusGroup>
          <StatusGroup $gap={0} $side={5}><Divider $h={14} /></StatusGroup>
          <StatusGroup $gap={2}>
            <SquareTool type="button" aria-label="普通视图" $on>
              <Icon><path d="M.5 1.500H15.500V13.500H.5ZM.5 5.500H15.500M.5 9.500H15.500M5.500 1.500V13.500M10.500 1.500V13.500" strokeWidth="1.200" /></Icon>
            </SquareTool>
            <SquareTool type="button" aria-label="分页预览">
              <Icon><path d="M.5.5H14.500V15.500H.5ZM2.500 2.500H12.500V13.500H2.500ZM7.500 2.500V13.500" /></Icon>
            </SquareTool>
            <SquareTool type="button" aria-label="页面布局">
              <Icon><path d="M.5 1.500H15.500V14.500H.5ZM.5 9.500H10.500V1.500M5.500 1.500V9.500" /></Icon>
            </SquareTool>
          </StatusGroup>
          <StatusGroup $gap={0} $side={4}><Divider $h={14} /></StatusGroup>
          <StatusGroup $gap={9}>
            <PlainButton type="button">100%<Caret /></PlainButton>
            <PlainButton type="button" aria-label="缩小"><Icon><path d="M3 8H13" strokeWidth="2" /></Icon></PlainButton>
            <ZoomSlider type="range" min={0} max={100} defaultValue={50} aria-label="缩放" />
            <PlainButton type="button" aria-label="放大"><Icon><path d="M3 8H13M8 3V13" strokeWidth="2" /></Icon></PlainButton>
            <PlainButton type="button" aria-label="全屏">
              <Icon><path d="M5 1.500H1.500V5M11 1.500H14.500V5M5 14.500H1.500V11M11 14.500H14.500V11M1.500 1.500 6 6M14.500 1.500 10 6M1.500 14.500 6 10M14.500 14.500 10 10" strokeWidth="1.300" /></Icon>
            </PlainButton>
          </StatusGroup>
        </StatusTools>
      </StatusBar>

      <Activation>
        <strong>激活 Windows</strong>
        转到“设置”以激活
      </Activation>
      <Brand>
        <Svg width={44} height={44} viewBox="0 0 44 44" aria-hidden="true">
          <defs>
            <linearGradient id="blueWave" x1="0" y1="1" x2="1" y2="0">
              <stop offset="0" stopColor="#1f62b0" /><stop offset="1" stopColor="#5cc3f0" />
            </linearGradient>
            <linearGradient id="greenWave" x1="0" y1="1" x2="1" y2="0">
              <stop offset="0" stopColor="#e0dc2c" /><stop offset=".6" stopColor="#2fae55" /><stop offset="1" stopColor="#3ebd6c" />
            </linearGradient>
          </defs>
          <path d="M44 2Q28 0 14 9 1 18 1 29 3 33 7 33 5 21 17 11 27 4 44 2Z" fill="url(#blueWave)" />
          <path d="M29 10Q12 14 11 24 11 29 17 28 24 26 24 21 21 25 17 24 15 19 29 10Z" fill="url(#blueWave)" />
          <path d="M24 20Q31 14 38 16 44 21 37 31 26 43 3 40 20 38 27 30 33 22 24 20Z" fill="url(#greenWave)" />
          <path d="M7 33Q17 35 26 26 22 37 10 35Z" fill="#1f62b0" />
        </Svg>
        <BrandText>
          极光下载站
          <small>www.xz7.com</small>
        </BrandText>
      </Brand>
    </App_>
  );
}
